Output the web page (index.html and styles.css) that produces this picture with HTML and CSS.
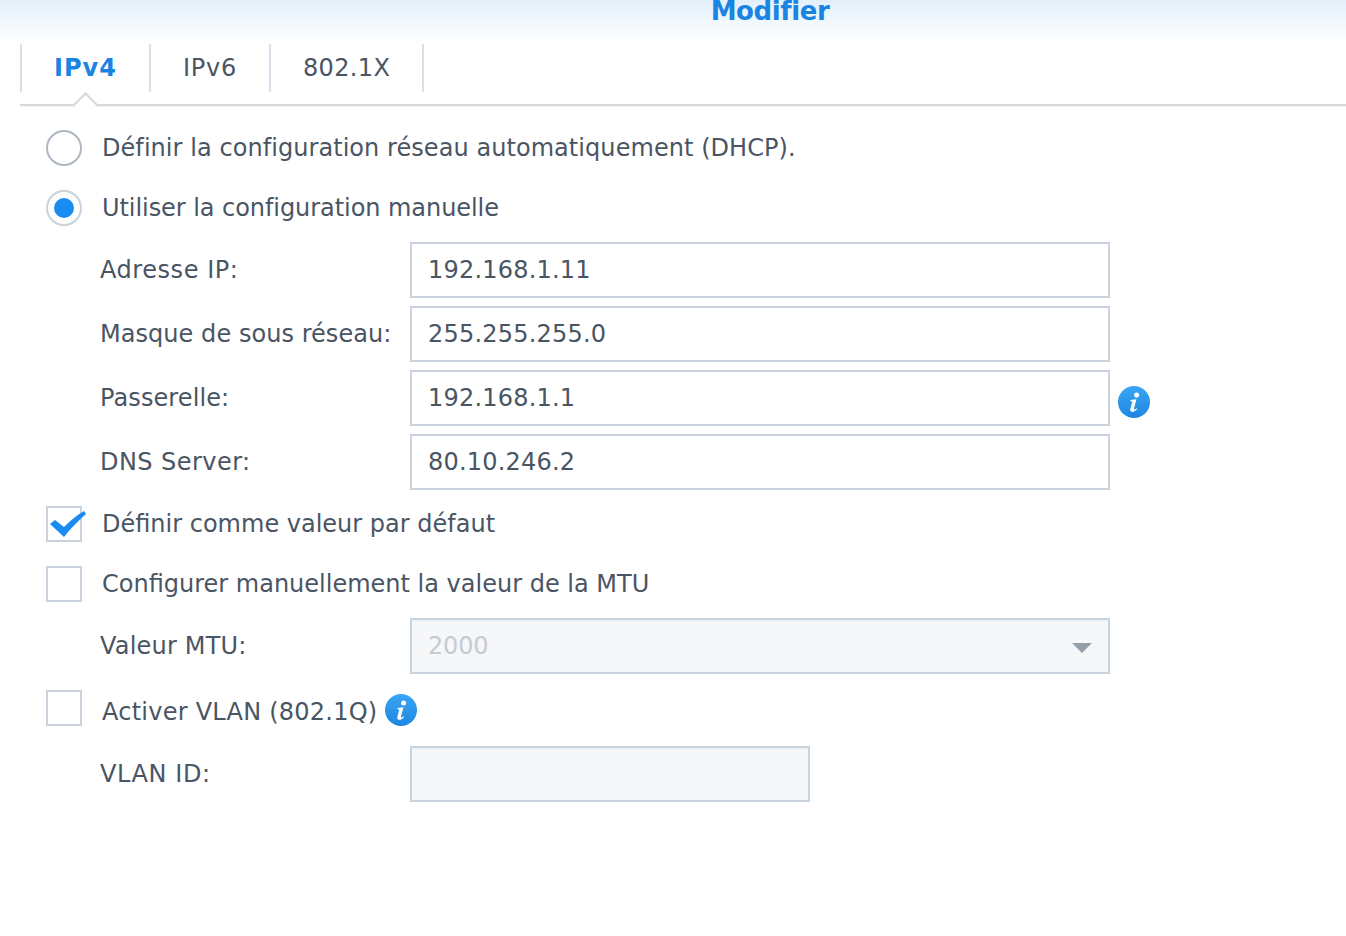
FILE: index.html
```html
<!DOCTYPE html>
<html lang="fr">
<head>
<meta charset="utf-8">
<title>Modifier</title>
<link rel="stylesheet" href="styles.css">
</head>
<body>
<header class="header"><h1 class="title">Modifier</h1></header>
<nav class="tabs">
  <a class="tab tab-active">IPv4</a>
  <a class="tab tab-v6">IPv6</a>
  <a class="tab tab-x">802.1X</a>
</nav>
<main class="form">
  <div class="opt opt-first">
    <span class="radio"></span><span class="opt-label sp-dhcp">Définir la configuration réseau automatiquement (DHCP).</span>
  </div>
  <div class="opt opt-radio2">
    <span class="radio radio-on"></span><span class="opt-label sp-manual">Utiliser la configuration manuelle</span>
  </div>
  <div class="fields">
    <div class="field"><label class="label sp-ip">Adresse IP:</label><div class="input">192.168.1.11</div></div>
    <div class="field"><label class="label sp-mask">Masque de sous réseau:</label><div class="input">255.255.255.0</div></div>
    <div class="field"><label class="label sp-gw">Passerelle:</label><div class="input">192.168.1.1</div>
      <svg class="info info-field" viewBox="0 0 32 32"><use href="#i"/></svg></div>
    <div class="field"><label class="label sp-dns">DNS Server:</label><div class="input">80.10.246.2</div></div>
  </div>
  <div class="opt opt-default">
    <span class="check">
      <svg class="tick" viewBox="0 0 36 26"><path d="M0 13 L5 9 L14 16 C20 10 27 4 34 0 L36 3 C28 10 20 18 14 26 Z" fill="#1a8cf0"/></svg>
    </span><span class="opt-label">Définir comme valeur par défaut</span>
  </div>
  <div class="opt opt-mtu">
    <span class="check"></span><span class="opt-label">Configurer manuellement la valeur de la MTU</span>
  </div>
  <div class="field field-mtu"><label class="label sp-mtu">Valeur MTU:</label>
    <div class="input input-off input-mtu">2000<span class="arrow"></span></div></div>
  <div class="opt opt-vlan">
    <span class="check"></span><span class="opt-label label-vlan">Activer VLAN (802.1Q)</span>
    <svg class="info info-vlan" viewBox="0 0 32 32"><use href="#i"/></svg>
  </div>
  <div class="field field-vlan"><label class="label sp-vlan">VLAN ID:</label><div class="input input-off input-short"></div></div>
</main>
<svg class="defs" width="0" height="0">
  <defs>
    <linearGradient id="g" x1="0" y1="0" x2="0" y2="1"><stop offset="0" stop-color="#3aa5f5"/><stop offset="1" stop-color="#1e86e0"/></linearGradient>
    <symbol id="i" viewBox="0 0 32 32">
      <circle cx="16" cy="16" r="16" fill="url(#g)"/>
      <circle cx="18.6" cy="9" r="2.5" fill="#fff"/>
      <path d="M12.5 14 L18.5 13.2 L16 22.5 C15.7 23.8 16.6 23.9 18.6 22.2 L19.2 23 C17 25.5 15.3 26 13.8 25.8 C12.4 25.5 12 24.4 12.4 22.8 L14.3 15.6 L12.4 15.2 Z" fill="#fff"/>
    </symbol>
  </defs>
</svg>
</body>
</html>
```
FILE: styles.css
```css
* { box-sizing: border-box; }
html, body { margin: 0; padding: 0; background: #fff; }
body {
  width: 1346px;
  height: 936px;
  overflow: hidden;
  font-family: "DejaVu Sans", Verdana, sans-serif;
  font-size: 24px;
  color: #4a5564;
}
.header {
  height: 44px;
  padding-left: 194px;
  background: linear-gradient(#e3f0fb, #ffffff);
  overflow: hidden;
}
.title {
  margin: -4px 0 0;
  font-size: 26px;
  line-height: 30px;
  font-weight: bold;
  letter-spacing: -0.4px;
  text-align: center;
  color: #1a84e3;
}
.tabs {
  position: relative;
  display: flex;
  height: 62px;
  margin-left: 20px;
  border-bottom: 2px solid #d6d9dc;
  box-shadow: 0 1px 1px rgba(0, 0, 0, 0.04);
  align-items: flex-start;
}
.tabs::before {
  content: "";
  position: absolute;
  left: 0; top: 0;
  width: 2px; height: 48px;
  background: #d5e0ea;
}
.tab {
  height: 48px;
  line-height: 49px;
  border-right: 2px solid #d5e0ea;
  white-space: nowrap;
}
.tab-active {
  position: relative;
  width: 131px;
  padding-left: 34px;
  font-weight: bold;
  letter-spacing: 1px;
  color: #1a84e3;
}
.tab-v6 { width: 120px; padding-left: 32px; letter-spacing: 0.75px; }
.tab-x { width: 153px; padding-left: 32px; letter-spacing: 0.35px; }
.tab-active::after {
  content: "";
  position: absolute;
  left: 56px;
  top: 52px;
  width: 17px;
  height: 17px;
  background: #fff;
  border-left: 2px solid #d6d9dc;
  border-top: 2px solid #d6d9dc;
  transform: rotate(45deg);
}
.form { padding: 0 0 0 46px; }
.opt { display: flex; align-items: center; height: 36px; }
.opt-first { margin-top: 24px; }
.opt-radio2 { margin-top: 24px; }
.opt-default { margin-top: 16px; }
.opt-mtu { margin-top: 24px; }
.opt-vlan { margin-top: 16px; }
.opt-label { margin-left: 20px; white-space: nowrap; }
.label-vlan { padding-top: 8px; letter-spacing: 0.24px; }
.sp-dhcp { letter-spacing: 0.06px; }
.sp-manual { letter-spacing: -0.06px; }
.radio {
  flex: none;
  width: 36px; height: 36px;
  border: 2px solid #aeb8c3;
  border-radius: 50%;
  background: #fff;
  display: flex;
  align-items: center;
  justify-content: center;
}
.radio-on { border-color: #c8d3de; }
.radio-on::before {
  content: "";
  width: 20px; height: 20px;
  border-radius: 50%;
  background: #1a8cf0;
}
.check {
  flex: none;
  position: relative;
  width: 36px; height: 36px;
  border: 2px solid #c8d3de;
  background: #fff;
}
.tick {
  position: absolute;
  left: 2px; top: 3px;
  width: 36px; height: 26px;
  overflow: visible;
}
.fields { margin-top: 16px; display: flex; flex-direction: column; gap: 8px; }
.field {
  display: flex;
  align-items: center;
  height: 56px;
  margin-left: 54px;
}
.field-mtu { margin-top: 16px; }
.field-vlan { margin-top: 20px; }
.label { width: 310px; flex: none; white-space: nowrap; }
.sp-ip { letter-spacing: 0.55px; }
.sp-mask { letter-spacing: 0.05px; }
.sp-gw { letter-spacing: 0.1px; }
.sp-dns { letter-spacing: 0.45px; }
.sp-mtu { letter-spacing: 0.2px; }
.sp-vlan { letter-spacing: 0.6px; }
.input {
  position: relative;
  width: 700px;
  height: 56px;
  line-height: 52px;
  padding-left: 16px;
  border: 2px solid #c8d3de;
  background: #fff;
  letter-spacing: 0.2px;
}
.input-off {
  background: #f5f7f9;
  color: #c6cbd1;
  box-shadow: inset 0 2px 0 #eef1f4;
}
.input-mtu { letter-spacing: -0.2px; }
.input-short { width: 400px; }
.arrow {
  position: absolute;
  right: 16px;
  top: 23px;
  width: 0; height: 0;
  border-left: 10px solid transparent;
  border-right: 10px solid transparent;
  border-top: 10px solid #939ea9;
}
.info { flex: none; width: 32px; height: 32px; }
.info-field { margin-left: 8px; position: relative; top: 4px; }
.info-vlan { margin-left: 8px; position: relative; top: 2px; }
.defs { position: absolute; }
```
